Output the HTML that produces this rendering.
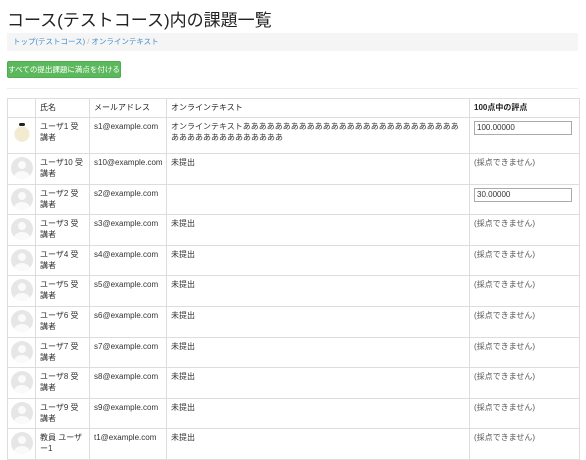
<!DOCTYPE html>
<html><head><meta charset="utf-8"><style>
body{margin:0;background:#fff;font-family:"Liberation Sans","Noto Sans CJK JP",sans-serif;color:#333;width:586px;height:451px;overflow:hidden;position:relative}
h1{position:absolute;left:7px;top:6px;margin:0;font-size:17px;font-weight:normal;color:#222;white-space:nowrap}
.bc{position:absolute;left:7px;top:33px;width:571px;height:18px;background:#f5f5f5;font-size:7.5px;line-height:18px;color:#428bca;padding-left:6px;box-sizing:border-box}
.bc span{color:#bbb}
.btn{position:absolute;left:7px;top:61px;width:114px;height:17px;background:#5cb85c;border:1px solid #4cae4c;border-radius:2px;color:#fff;font-size:7.5px;line-height:15px;text-align:center;box-sizing:border-box}
.hr{position:absolute;left:7px;top:88px;width:571px;border-top:1px solid #eee}
table{position:absolute;left:7px;top:98px;border-collapse:collapse;width:572px;font-size:8px;table-layout:fixed}
td,th{border:1px solid #ddd;vertical-align:top;padding:3px 4px;line-height:11px;text-align:left;overflow:hidden}
th{font-weight:normal;color:#222;height:12px}
tr.r td{height:23.6px}
.av{width:22px;height:22px;border-radius:50%;background:#e6e6e6;position:relative;overflow:hidden;margin-top:0;margin-left:-1px}
.av:before{content:"";position:absolute;left:7px;top:4px;width:8px;height:8px;border-radius:50%;background:#fafafa}
.av:after{content:"";position:absolute;left:3px;top:14px;width:16px;height:12px;border-radius:50%;background:#fafafa}
.inp{border:1px solid #aaa;background:#fff;width:98px;font-size:8px;line-height:12px;padding-left:2px;box-sizing:border-box;height:14px}
.g{color:#555}
</style></head><body>
<h1>コース(テストコース)内の課題一覧</h1>
<div class="bc">トップ(テストコース) <span>/</span> オンラインテキスト</div>
<div class="btn">すべての提出課題に満点を付ける</div>
<div class="hr"></div>
<table>
<colgroup><col style="width:28px"><col style="width:54px"><col style="width:77px"><col style="width:303px"><col style="width:110px"></colgroup>
<tr><th></th><th>氏名</th><th>メールアドレス</th><th>オンラインテキスト</th><th style="font-weight:bold">100点中の評点</th></tr>
<tr class="r"><td style="height:29px"><div style="width:20px;height:22px;margin-top:1px;background:radial-gradient(circle at 50% 55%,#f3ead2 45%,transparent 52%);position:relative"><div style="position:absolute;left:7px;top:1px;width:6px;height:3px;background:#222;border-radius:2px"></div></div></td><td>ユーザ1 受講者</td><td>s1@example.com</td><td>オンラインテキストあああああああああああああああああああああああああああああああああああああああああ</td><td><div class="inp">100.00000</div></td></tr>
<tr class="r"><td><div class="av"></div></td><td>ユーザ10 受講者</td><td>s10@example.com</td><td>未提出</td><td class="g">(採点できません)</td></tr>
<tr class="r"><td><div class="av"></div></td><td>ユーザ2 受講者</td><td>s2@example.com</td><td></td><td><div class="inp">30.00000</div></td></tr>
<tr class="r"><td><div class="av"></div></td><td>ユーザ3 受講者</td><td>s3@example.com</td><td>未提出</td><td class="g">(採点できません)</td></tr>
<tr class="r"><td><div class="av"></div></td><td>ユーザ4 受講者</td><td>s4@example.com</td><td>未提出</td><td class="g">(採点できません)</td></tr>
<tr class="r"><td><div class="av"></div></td><td>ユーザ5 受講者</td><td>s5@example.com</td><td>未提出</td><td class="g">(採点できません)</td></tr>
<tr class="r"><td><div class="av"></div></td><td>ユーザ6 受講者</td><td>s6@example.com</td><td>未提出</td><td class="g">(採点できません)</td></tr>
<tr class="r"><td><div class="av"></div></td><td>ユーザ7 受講者</td><td>s7@example.com</td><td>未提出</td><td class="g">(採点できません)</td></tr>
<tr class="r"><td><div class="av"></div></td><td>ユーザ8 受講者</td><td>s8@example.com</td><td>未提出</td><td class="g">(採点できません)</td></tr>
<tr class="r"><td><div class="av"></div></td><td>ユーザ9 受講者</td><td>s9@example.com</td><td>未提出</td><td class="g">(採点できません)</td></tr>
<tr class="r"><td><div class="av"></div></td><td>教員 ユーザー1</td><td>t1@example.com</td><td>未提出</td><td class="g">(採点できません)</td></tr>
</table>
</body></html>
